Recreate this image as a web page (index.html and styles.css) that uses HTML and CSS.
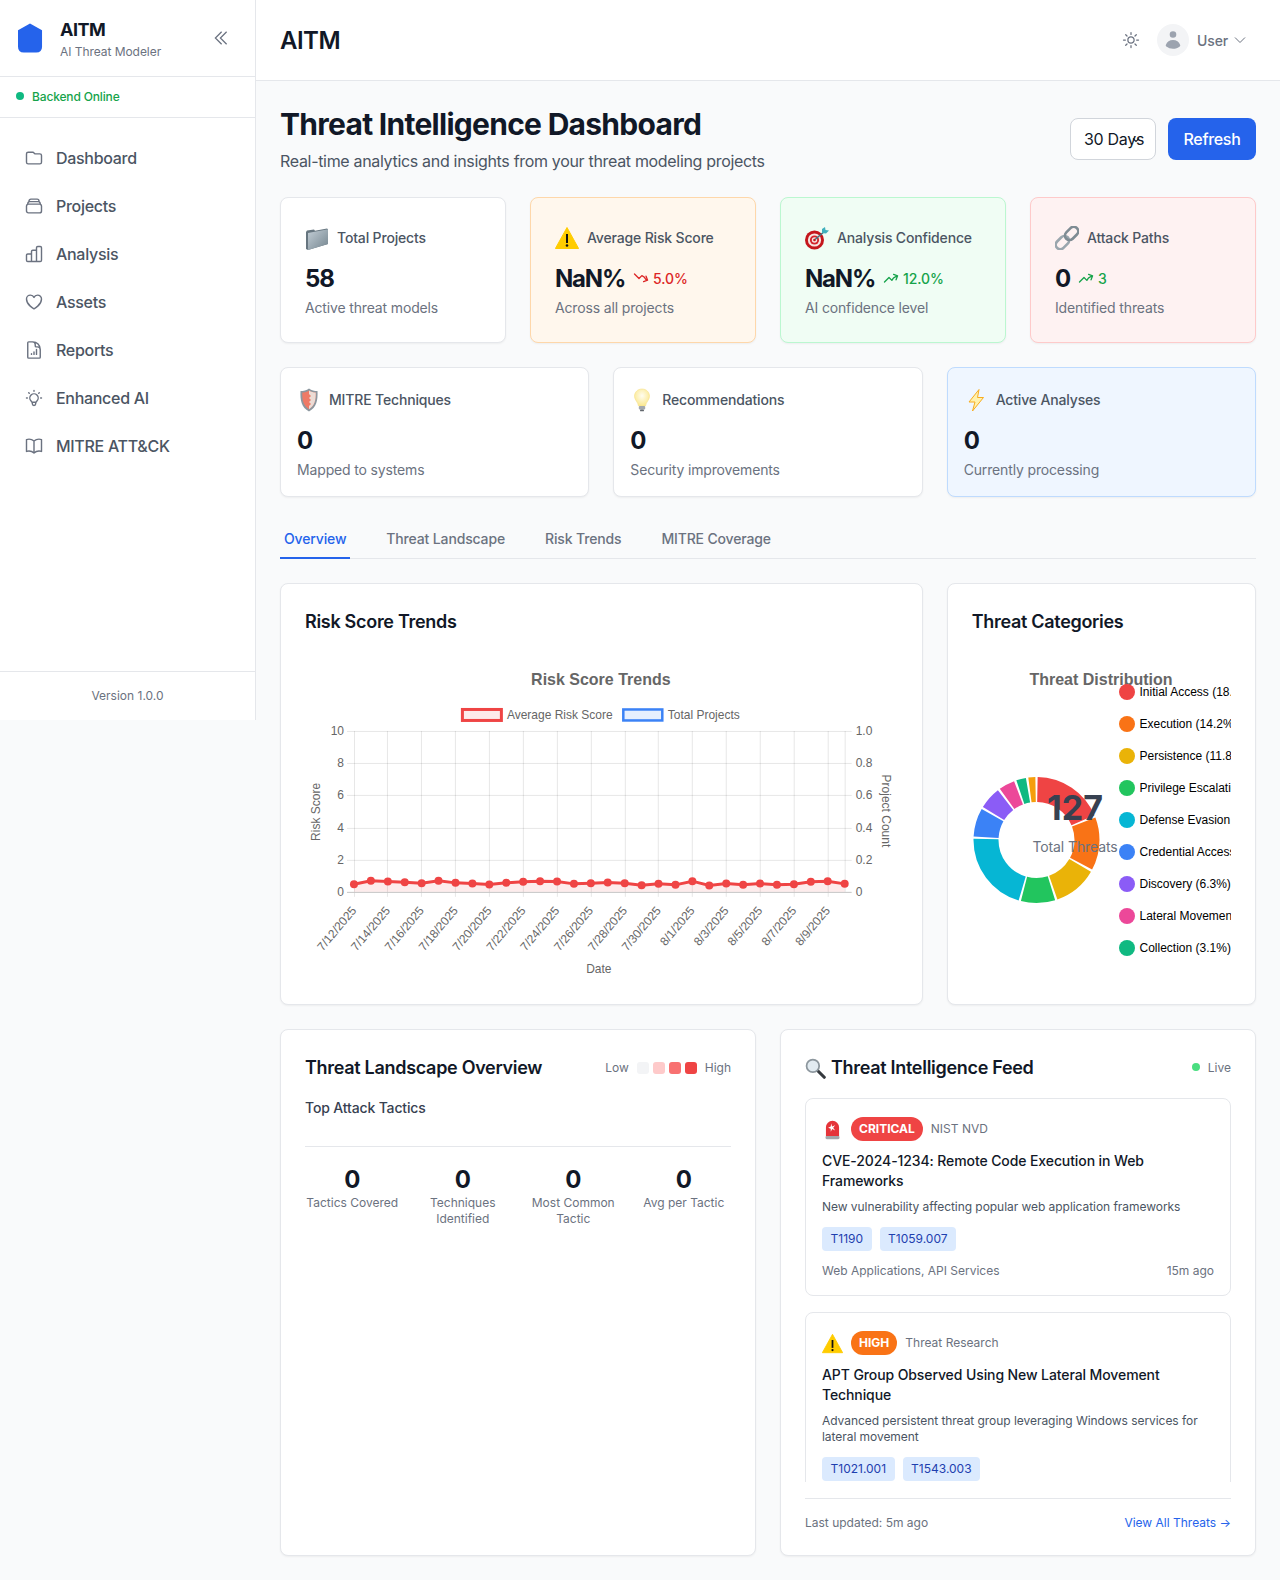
FILE: index.html
```html
<!DOCTYPE html>
<html lang="en">
<head>
<meta charset="UTF-8">
<title>AITM - Threat Intelligence Dashboard</title>
<link rel="stylesheet" href="styles.css">
</head>
<body>
    <!-- pictures used more than once, and the coloured emoji-like ones -->
    <svg class="sprite" aria-hidden="true">
        <defs>
            <linearGradient id="folderFill" x1="0" y1="0" x2="1" y2="1">
                <stop offset="0" stop-color="#c3ced6"/>
                <stop offset="1" stop-color="#74858f"/>
            </linearGradient>
            <radialGradient id="bulbFill" cx="0.5" cy="0.4" r="0.6">
                <stop offset="0" stop-color="#fffdf0"/>
                <stop offset="1" stop-color="#fbe88f"/>
            </radialGradient>
        </defs>
        <symbol id="e-folder" viewBox="0 0 24 24">
            <path d="M1 6 2 4.5 9 3.5 10 4.8 22 2.5 23 3.2V18L3 24 1 23Z" fill="#66757f"/>
            <path d="M3 7 23 3.2V18L3 24Z" fill="url(#folderFill)"/>
        </symbol>
        <symbol id="e-warning" viewBox="0 0 24 24">
            <path d="M12 1.5 23.6 22.5H.4Z" fill="#fc0" stroke="#fc0" stroke-linejoin="round"/>
            <rect x="11" y="8" width="2" height="9" fill="#111"/>
            <circle cx="12" cy="19.5" r="1.3" fill="#111"/>
        </symbol>
        <symbol id="e-target" viewBox="0 0 24 24">
            <circle cx="9.5" cy="14" r="9.5" fill="#c4161c"/>
            <circle cx="9.5" cy="14" r="6.6" fill="#f6e4e0"/>
            <circle cx="9.5" cy="14" r="4.6" fill="#d4232a"/>
            <circle cx="9.5" cy="14" r="2.7" fill="#f6e4e0"/>
            <circle cx="9.5" cy="14" r="1.3" fill="#c4161c"/>
            <path d="M10 13.5 20 5" stroke="#47737f" stroke-width="1.6"/>
            <path d="M17 3 20 1 20.5 4 24 4.500 21 7.500 17 7Z" fill="#3fb0bd"/>
        </symbol>
        <symbol id="e-link" viewBox="0 0 24 24">
            <g transform="rotate(-45 12 12)" fill="none" stroke-width="2.6">
                <rect x="-2" y="7.500" width="15" height="9" rx="4.500" stroke="#9aa6ae"/>
                <rect x="11" y="7.500" width="15" height="9" rx="4.500" stroke="#7f8c94"/>
            </g>
        </symbol>
        <symbol id="e-shield" viewBox="0 0 24 24">
            <path d="M12 .5C14.500 2.500 17.500 3 20.500 3 21 12 19.500 19.500 12 23.500 4.500 19.500 3 12 3.500 3 6.500 3 9.500 2.500 12 .5Z" fill="#8c979f"/>
            <path d="M12 2.500C14 4 16.500 4.500 18.700 4.600 19 12 17.500 18 12 21.300 6.500 18 5 12 5.300 4.600 7.500 4.500 10 4 12 2.500Z" fill="#ee7a66"/>
            <path d="M12 2.500C14 4 16.500 4.500 18.700 4.600 19 12 17.500 18 12 21.300V18L14 16 12 14 14 12 12 10 14 8 12 6Z" fill="#ecdcd5"/>
        </symbol>
        <symbol id="e-bulb" viewBox="0 0 24 24">
            <path d="M12 1C7.500 1 4.500 4.300 4.500 8.300 4.500 12 8 14 8.500 18H15.500C16 14 19.500 12 19.500 8.300 19.500 4.300 16.500 1 12 1Z" fill="url(#bulbFill)" stroke="#f6e08a" stroke-width=".6"/>
            <rect x="8.800" y="18" width="6.400" height="3.500" rx="1" fill="#a3a8ad"/>
            <rect x="10" y="21.500" width="4" height="1.800" rx=".9" fill="#62686e"/>
        </symbol>
        <symbol id="e-bolt" viewBox="0 0 24 24">
            <path d="M15 1.500 5 14H11L8.500 23 19.500 9.500H13.500Z" fill="#fff1ad" stroke="#f8ac1e" stroke-linejoin="round"/>
        </symbol>
        <symbol id="e-search" viewBox="0 0 24 24">
            <path d="M14 14 22 22" stroke="#35393e" stroke-width="3.600" stroke-linecap="round"/>
            <circle cx="9" cy="9" r="7.200" fill="#e2ebf1" stroke="#8d979e" stroke-width="2"/>
        </symbol>
        <symbol id="e-siren" viewBox="0 0 24 24">
            <path d="M4.500 20V9.500a7.500 7.500 0 0 1 15 0V20Z" fill="#e5343a"/>
            <path d="M10.500 5 11.500 8.500 15 7 12.800 10 15 13 11.700 11.500 10 14.500 10 11 7 10 10 8.500Z" fill="#fff"/>
            <rect x="4" y="19.500" width="16" height="3.500" rx="1.500" fill="#a2a7ab"/>
        </symbol>
        <symbol id="trend-up" viewBox="0 0 24 24">
            <path d="M2.250 18 9 11.250l4.306 4.307a11.950 11.950 0 0 1 5.814-5.519l2.740-1.220m0 0-5.940-2.280m5.940 2.280-2.280 5.941" fill="none" stroke="currentColor" stroke-width="2" stroke-linecap="round" stroke-linejoin="round"/>
        </symbol>
        <symbol id="trend-down" viewBox="0 0 24 24">
            <path d="M2.250 6 9 12.750l4.306-4.307a11.950 11.950 0 0 1 5.814 5.519l2.740 1.220m0 0-5.940 2.280m5.940-2.280-2.280-5.941" fill="none" stroke="currentColor" stroke-width="2" stroke-linecap="round" stroke-linejoin="round"/>
        </symbol>
    </svg>

    <div class="layout">
        <aside class="sidebar">
            <div class="brand">
                <svg class="brand-logo" viewBox="0 0 26 30"><path d="M12.500 0 25 7V24Q25 30 19 30H6Q0 30 0 24V7Z"/></svg>
                <div class="brand-text">
                    <div class="brand-name">AITM</div>
                    <div class="brand-sub">AI Threat Modeler</div>
                </div>
                <svg class="collapse-icon" viewBox="0 0 24 24"><path d="M18.750 19.500 11.250 12l7.500-7.500m-6 15L5.250 12l7.500-7.500"/></svg>
            </div>
            <div class="backend-status"><span class="status-dot"></span>Backend Online</div>
            <nav class="nav">
                <a class="nav-item"><svg viewBox="0 0 24 24"><path d="M3 7v10a2 2 0 0 0 2 2h14a2 2 0 0 0 2-2V9a2 2 0 0 0-2-2h-6l-2-2H5a2 2 0 0 0-2 2z"/></svg>Dashboard</a>
                <a class="nav-item"><svg viewBox="0 0 24 24"><path d="M6 6.878V6a2.250 2.250 0 0 1 2.250-2.250h7.500A2.250 2.250 0 0 1 18 6v.878m-12 0c.235-.083.487-.128.750-.128h10.500c.263 0 .515.045.750.128m-12 0A2.250 2.250 0 0 0 4.500 9v.878m13.500-3A2.250 2.250 0 0 1 19.500 9v.878m0 0a2.246 2.246 0 0 0-.750-.128H5.250c-.263 0-.515.045-.750.128m15 0A2.250 2.250 0 0 1 21 12v6a2.250 2.250 0 0 1-2.250 2.250H5.250A2.250 2.250 0 0 1 3 18v-6c0-.980.626-1.813 1.500-2.122"/></svg>Projects</a>
                <a class="nav-item"><svg viewBox="0 0 24 24"><path d="M3 13.500A1.500 1.500 0 0 1 4.500 12H9v9H4.500A1.500 1.500 0 0 1 3 19.500ZM9 9a1.500 1.500 0 0 1 1.500-1.500H15V21H9ZM15 4.500A1.500 1.500 0 0 1 16.500 3h3A1.500 1.500 0 0 1 21 4.500v15a1.500 1.500 0 0 1-1.500 1.500H15Z"/></svg>Analysis</a>
                <a class="nav-item"><svg viewBox="0 0 24 24"><path d="M21 8.250c0-2.485-2.099-4.500-4.688-4.500-1.935 0-3.597 1.126-4.312 2.733-.715-1.607-2.377-2.733-4.313-2.733C5.100 3.750 3 5.765 3 8.250c0 7.220 9 12 9 12s9-4.780 9-12z"/></svg>Assets</a>
                <a class="nav-item"><svg viewBox="0 0 24 24"><path d="M19.500 14.250v-2.625a3.375 3.375 0 0 0-3.375-3.375h-1.500A1.125 1.125 0 0 1 13.500 7.125v-1.500a3.375 3.375 0 0 0-3.375-3.375H8.250M9 16.500v.750m3-3v3m3-6v6M10.500 2.250H5.625c-.621 0-1.125.504-1.125 1.125v17.250c0 .621.504 1.125 1.125 1.125h12.750c.621 0 1.125-.504 1.125-1.125V11.250a9 9 0 0 0-9-9z"/></svg>Reports</a>
                <a class="nav-item"><svg viewBox="0 0 24 24"><path d="M9.663 17h4.673M12 3v1m6.364 1.636-.707.707M21 12h-1M4 12H3m3.343-5.657-.707-.707m2.828 9.900a5 5 0 1 1 7.072 0l-.548.547A3.374 3.374 0 0 0 14 18.469V19a2 2 0 1 1-4 0v-.531c0-.895-.356-1.754-.988-2.386l-.548-.547z"/></svg>Enhanced AI</a>
                <a class="nav-item"><svg viewBox="0 0 24 24"><path d="M12 6.042A8.967 8.967 0 0 0 6 3.750c-1.052 0-2.062.180-3 .512v14.250A8.987 8.987 0 0 1 6 18c2.305 0 4.408.867 6 2.292m0-14.250a8.966 8.966 0 0 1 6-2.292c1.052 0 2.062.180 3 .512v14.250A8.987 8.987 0 0 0 18 18a8.967 8.967 0 0 0-6 2.292m0-14.250v14.250"/></svg>MITRE ATT&amp;CK</a>
            </nav>
            <div class="sidebar-footer">Version 1.0.0</div>
        </aside>

        <div class="main">
            <header class="topbar">
                <div class="topbar-title">AITM</div>
                <div class="topbar-right">
                    <svg class="sun-icon" viewBox="0 0 24 24"><path d="M12 3v2.250m6.364.386-1.591 1.591M21 12h-2.250m-.386 6.364-1.591-1.591M12 18.750V21m-4.773-4.227-1.591 1.591M5.250 12H3m4.227-4.773L5.636 5.636M15.750 12a3.750 3.750 0 1 1-7.500 0 3.750 3.750 0 0 1 7.500 0z"/></svg>
                    <div class="user-menu">
                        <span class="avatar"><svg viewBox="0 0 20 20"><path d="M10 8a3 3 0 1 0 0-6 3 3 0 0 0 0 6zM3.465 14.493a1.230 1.230 0 0 0 .410 1.412A9.957 9.957 0 0 0 10 18c2.310 0 4.438-.784 6.131-2.100.430-.333.604-.903.408-1.410a7.002 7.002 0 0 0-13.074.003z"/></svg></span>
                        <span class="user-name">User</span>
                        <svg class="user-chevron" viewBox="0 0 24 24"><path d="M19.500 8.250 12 15.750 4.500 8.250"/></svg>
                    </div>
                </div>
            </header>

            <main class="content">
                <div class="page-head">
                    <div>
                        <h1 class="page-title">Threat Intelligence Dashboard</h1>
                        <p class="page-sub">Real-time analytics and insights from your threat modeling projects</p>
                    </div>
                    <div class="page-actions">
                        <div class="range-select">30 Days<svg viewBox="0 0 10 10"><path d="M2 3.500 5 6.500 8 3.500"/></svg></div>
                        <button class="refresh-btn">Refresh</button>
                    </div>
                </div>

                <div class="stats stats-four">
                    <div class="stat-card">
                        <div class="stat-label"><svg class="emoji"><use href="#e-folder"/></svg>Total Projects</div>
                        <div class="stat-value-row"><span class="stat-value">58</span></div>
                        <div class="stat-sub">Active threat models</div>
                    </div>
                    <div class="stat-card stat-orange">
                        <div class="stat-label"><svg class="emoji"><use href="#e-warning"/></svg>Average Risk Score</div>
                        <div class="stat-value-row"><span class="stat-value">NaN%</span><span class="trend trend-bad"><svg><use href="#trend-down"/></svg>5.0%</span></div>
                        <div class="stat-sub">Across all projects</div>
                    </div>
                    <div class="stat-card stat-green">
                        <div class="stat-label"><svg class="emoji"><use href="#e-target"/></svg>Analysis Confidence</div>
                        <div class="stat-value-row"><span class="stat-value">NaN%</span><span class="trend trend-good"><svg><use href="#trend-up"/></svg>12.0%</span></div>
                        <div class="stat-sub">AI confidence level</div>
                    </div>
                    <div class="stat-card stat-red">
                        <div class="stat-label"><svg class="emoji"><use href="#e-link"/></svg>Attack Paths</div>
                        <div class="stat-value-row"><span class="stat-value">0</span><span class="trend trend-good"><svg><use href="#trend-up"/></svg>3</span></div>
                        <div class="stat-sub">Identified threats</div>
                    </div>
                </div>

                <div class="stats stats-three">
                    <div class="stat-card stat-small">
                        <div class="stat-label"><svg class="emoji"><use href="#e-shield"/></svg>MITRE Techniques</div>
                        <div class="stat-value-row"><span class="stat-value">0</span></div>
                        <div class="stat-sub">Mapped to systems</div>
                    </div>
                    <div class="stat-card stat-small">
                        <div class="stat-label"><svg class="emoji"><use href="#e-bulb"/></svg>Recommendations</div>
                        <div class="stat-value-row"><span class="stat-value">0</span></div>
                        <div class="stat-sub">Security improvements</div>
                    </div>
                    <div class="stat-card stat-small stat-blue">
                        <div class="stat-label"><svg class="emoji"><use href="#e-bolt"/></svg>Active Analyses</div>
                        <div class="stat-value-row"><span class="stat-value">0</span></div>
                        <div class="stat-sub">Currently processing</div>
                    </div>
                </div>

                <div class="tabs">
                    <a class="tab tab-active">Overview</a>
                    <a class="tab">Threat Landscape</a>
                    <a class="tab">Risk Trends</a>
                    <a class="tab">MITRE Coverage</a>
                </div>

                <div class="chart-row">
                    <section class="panel panel-wide">
                        <h2 class="panel-title">Risk Score Trends</h2>
                        <svg class="chart" viewBox="305 652 593 328" preserveAspectRatio="xMinYMin">
                            <path class="grid" d="M347 731.500H852M347 763.500H852M347 795.500H852M347 828.500H852M347 860.500H852M354.500 731V897M387.500 731V897M421.500 731V897M455.500 731V897M489.500 731V897M523.500 731V897M557.500 731V897M591.500 731V897M625.500 731V897M658.500 731V897M692.500 731V897M726.500 731V897M760.500 731V897M794.500 731V897M828.500 731V897M845.500 731V892"/>
                            <path class="axis" d="M347 892.500H852"/>
                            <text class="chart-title" x="601" y="685">Risk Score Trends</text>

                            <rect x="462.500" y="709.500" width="39" height="11" fill="#fdeaea" stroke="#ef4444" stroke-width="3"/>
                            <text class="tick" x="507" y="719">Average Risk Score</text>
                            <rect x="623.500" y="709.500" width="39" height="11" fill="#e7f0fe" stroke="#3b82f6" stroke-width="2.500"/>
                            <text class="tick" x="668" y="719">Total Projects</text>

                            <g class="tick tick-end">
                                <text x="344" y="735">10</text>
                                <text x="344" y="767">8</text>
                                <text x="344" y="799">6</text>
                                <text x="344" y="832">4</text>
                                <text x="344" y="864">2</text>
                                <text x="344" y="896">0</text>
                            </g>
                            <g class="tick">
                                <text x="856" y="735">1.0</text>
                                <text x="856" y="767">0.8</text>
                                <text x="856" y="799">0.6</text>
                                <text x="856" y="832">0.4</text>
                                <text x="856" y="864">0.2</text>
                                <text x="856" y="896">0</text>
                            </g>
                            <g class="tick tick-mid">
                                <text transform="translate(320 812) rotate(-90)">Risk Score</text>
                                <text transform="translate(882 811) rotate(90)">Project Count</text>
                                <text x="599" y="973">Date</text>
                            </g>
                            <g class="tick tick-end">
                                <text transform="translate(357 911) rotate(-50)">7/12/2025</text>
                                <text transform="translate(390.900 911) rotate(-50)">7/14/2025</text>
                                <text transform="translate(424.700 911) rotate(-50)">7/16/2025</text>
                                <text transform="translate(458.600 911) rotate(-50)">7/18/2025</text>
                                <text transform="translate(492.400 911) rotate(-50)">7/20/2025</text>
                                <text transform="translate(526.300 911) rotate(-50)">7/22/2025</text>
                                <text transform="translate(560.200 911) rotate(-50)">7/24/2025</text>
                                <text transform="translate(594 911) rotate(-50)">7/26/2025</text>
                                <text transform="translate(627.900 911) rotate(-50)">7/28/2025</text>
                                <text transform="translate(661.700 911) rotate(-50)">7/30/2025</text>
                                <text transform="translate(695.600 911) rotate(-50)">8/1/2025</text>
                                <text transform="translate(729.500 911) rotate(-50)">8/3/2025</text>
                                <text transform="translate(763.300 911) rotate(-50)">8/5/2025</text>
                                <text transform="translate(797.200 911) rotate(-50)">8/7/2025</text>
                                <text transform="translate(831 911) rotate(-50)">8/9/2025</text>
                            </g>

                            <marker id="dot" markerUnits="userSpaceOnUse" markerWidth="10" markerHeight="10" refX="5" refY="5">
                                <circle cx="5" cy="5" r="4" fill="#ef4444"/>
                            </marker>
                            <path class="risk-area" d="M354 884.300 370.900 881 387.900 881.700 404.800 882.300 421.700 883.300 438.600 881 455.600 883 472.500 883.700 489.400 884.700 506.400 883 523.300 882 540.200 881.300 557.200 881.700 574.100 884 591 883.300 607.900 882.700 624.900 883.300 641.800 885.300 658.700 884 675.700 885 692.600 881.300 709.500 885.700 726.500 883.700 743.400 885 760.300 883.700 777.200 885 794.200 884.300 811.100 882 828 881.300 845 884V892H354Z"/>
                            <polyline class="risk-line" points="354,884.300 370.900,881 387.900,881.700 404.800,882.300 421.700,883.300 438.600,881 455.600,883 472.500,883.700 489.400,884.700 506.400,883 523.300,882 540.200,881.300 557.200,881.700 574.100,884 591,883.300 607.900,882.700 624.900,883.300 641.800,885.300 658.700,884 675.700,885 692.600,881.300 709.500,885.700 726.500,883.700 743.400,885 760.300,883.700 777.200,885 794.200,884.300 811.100,882 828,881.300 845,884"/>
                        </svg>
                    </section>

                    <section class="panel">
                        <h2 class="panel-title">Threat Categories</h2>
                        <svg class="chart" viewBox="972 652 259.330 328" preserveAspectRatio="xMinYMin">
                            <g class="donut" transform="rotate(-90 1036.500 840)">
                                <circle cx="1036.500" cy="840" r="50.500" pathLength="100" stroke="#ef4444" stroke-dasharray="18.300 81.700" stroke-dashoffset="-.3"/>
                                <circle cx="1036.500" cy="840" r="50.500" pathLength="100" stroke="#f97316" stroke-dasharray="13.600 86.400" stroke-dashoffset="-19.200"/>
                                <circle cx="1036.500" cy="840" r="50.500" pathLength="100" stroke="#eab308" stroke-dasharray="11.200 88.800" stroke-dashoffset="-33.400"/>
                                <circle cx="1036.500" cy="840" r="50.500" pathLength="100" stroke="#22c55e" stroke-dasharray="8.800 91.200" stroke-dashoffset="-45.200"/>
                                <circle cx="1036.500" cy="840" r="50.500" pathLength="100" stroke="#06b6d4" stroke-dasharray="20.700 79.300" stroke-dashoffset="-54.600"/>
                                <circle cx="1036.500" cy="840" r="50.500" pathLength="100" stroke="#3b82f6" stroke-dasharray="7.300 92.700" stroke-dashoffset="-75.900"/>
                                <circle cx="1036.500" cy="840" r="50.500" pathLength="100" stroke="#8b5cf6" stroke-dasharray="5.700 94.300" stroke-dashoffset="-83.800"/>
                                <circle cx="1036.500" cy="840" r="50.500" pathLength="100" stroke="#ec4899" stroke-dasharray="4.100 95.900" stroke-dashoffset="-90.100"/>
                                <circle cx="1036.500" cy="840" r="50.500" pathLength="100" stroke="#10b981" stroke-dasharray="2.500 97.500" stroke-dashoffset="-94.800"/>
                                <circle cx="1036.500" cy="840" r="50.500" pathLength="100" stroke="#f59e0b" stroke-dasharray="1.800 98.200" stroke-dashoffset="-97.900"/>
                            </g>
                            <text class="chart-title" x="1101" y="685">Threat Distribution</text>
                            <text class="donut-total" x="1075" y="820">127</text>
                            <text class="donut-label" x="1075" y="852">Total Threats</text>
                            <g class="donut-legend">
                                <circle cx="1127" cy="692" r="8" fill="#ef4444"/><text x="1139.500" y="696">Initial Access (18.9%)</text>
                                <circle cx="1127" cy="724" r="8" fill="#f97316"/><text x="1139.500" y="728">Execution (14.2%)</text>
                                <circle cx="1127" cy="756" r="8" fill="#eab308"/><text x="1139.500" y="760">Persistence (11.8%)</text>
                                <circle cx="1127" cy="788" r="8" fill="#22c55e"/><text x="1139.500" y="792">Privilege Escalation (9.4%)</text>
                                <circle cx="1127" cy="820" r="8" fill="#06b6d4"/><text x="1139.500" y="824">Defense Evasion (21.3%)</text>
                                <circle cx="1127" cy="852" r="8" fill="#3b82f6"/><text x="1139.500" y="856">Credential Access (7.9%)</text>
                                <circle cx="1127" cy="884" r="8" fill="#8b5cf6"/><text x="1139.500" y="888">Discovery (6.3%)</text>
                                <circle cx="1127" cy="916" r="8" fill="#ec4899"/><text x="1139.500" y="920">Lateral Movement (4.7%)</text>
                                <circle cx="1127" cy="948" r="8" fill="#10b981"/><text x="1139.500" y="952">Collection (3.1%)</text>
                            </g>
                        </svg>
                    </section>
                </div>

                <div class="bottom-row">
                    <section class="panel">
                        <div class="panel-head">
                            <h2 class="panel-title">Threat Landscape Overview</h2>
                            <div class="heat-legend">
                                <span>Low</span>
                                <div class="heat-cells">
                                    <i class="heat-0"></i><i class="heat-1"></i><i class="heat-2"></i><i class="heat-3"></i>
                                </div>
                                <span>High</span>
                            </div>
                        </div>
                        <h3 class="tactics-title">Top Attack Tactics</h3>
                        <div class="tactics-stats">
                            <div><div class="tactic-value">0</div><div class="tactic-label">Tactics Covered</div></div>
                            <div><div class="tactic-value">0</div><div class="tactic-label">Techniques Identified</div></div>
                            <div><div class="tactic-value">0</div><div class="tactic-label">Most Common Tactic</div></div>
                            <div><div class="tactic-value">0</div><div class="tactic-label">Avg per Tactic</div></div>
                        </div>
                    </section>

                    <section class="panel">
                        <div class="panel-head">
                            <h2 class="panel-title feed-title"><svg class="feed-search"><use href="#e-search"/></svg>Threat Intelligence Feed</h2>
                            <div class="live"><span class="live-dot"></span>Live</div>
                        </div>
                        <div class="feed-list">
                            <article class="feed-item">
                                <div class="feed-top">
                                    <svg class="feed-emoji"><use href="#e-siren"/></svg>
                                    <span class="badge badge-critical">CRITICAL</span>
                                    <span class="feed-source">NIST NVD</span>
                                </div>
                                <div class="feed-name">CVE-2024-1234: Remote Code Execution in Web Frameworks</div>
                                <p class="feed-desc">New vulnerability affecting popular web application frameworks</p>
                                <div class="feed-tags"><span class="tag">T1190</span><span class="tag">T1059.007</span></div>
                                <div class="feed-meta"><span>Web Applications, API Services</span><span>15m ago</span></div>
                            </article>
                            <article class="feed-item">
                                <div class="feed-top">
                                    <svg class="feed-emoji"><use href="#e-warning"/></svg>
                                    <span class="badge badge-high">HIGH</span>
                                    <span class="feed-source">Threat Research</span>
                                </div>
                                <div class="feed-name">APT Group Observed Using New Lateral Movement Technique</div>
                                <p class="feed-desc">Advanced persistent threat group leveraging Windows services for lateral movement</p>
                                <div class="feed-tags"><span class="tag">T1021.001</span><span class="tag">T1543.003</span></div>
                                <div class="feed-meta"><span>Windows Servers</span><span>1h ago</span></div>
                            </article>
                        </div>
                        <div class="feed-footer">
                            <span>Last updated: 5m ago</span>
                            <a class="feed-link">View All Threats →</a>
                        </div>
                    </section>
                </div>
            </main>
        </div>
    </div>
</body>
</html>
```

FILE: styles.css
```css
* {
    box-sizing: border-box;
}

body {
    margin: 0;
    background-color: #f9fafb;
    color: #111827;
    font-family: 'Inter', 'Liberation Sans', sans-serif;
}

h1, h2, h3, p {
    margin: 0;
}

.sprite {
    position: absolute;
    width: 0;
    height: 0;
}

.layout {
    display: flex;
    align-items: flex-start;
}

/* Sidebar */
.sidebar {
    width: 256px;
    height: 720px;
    flex-shrink: 0;
    display: flex;
    flex-direction: column;
    background: #fff;
    border-right: 1px solid #e5e7eb;
}

.brand {
    height: 77px;
    display: flex;
    align-items: center;
    padding-left: 18px;
    border-bottom: 1px solid #e5e7eb;
}

.brand-logo {
    width: 25px;
    height: 30px;
    fill: #2563eb;
}

.brand-text {
    margin-left: 17px;
    width: 151px;
}

.brand-name {
    font-size: 18px;
    line-height: 28px;
    font-weight: 700;
    letter-spacing: -0.5px;
}

.brand-sub {
    font-size: 12px;
    line-height: 16px;
    color: #6b7280;
    letter-spacing: -0.05px;
}

.collapse-icon {
    width: 20px;
    height: 20px;
    fill: none;
    stroke: #6b7280;
    stroke-width: 1.5;
}

.backend-status {
    height: 41px;
    display: flex;
    align-items: center;
    gap: 8px;
    padding: 0 0 2px 16px;
    font-size: 12px;
    font-weight: 500;
    letter-spacing: -0.15px;
    color: #16a34a;
    border-bottom: 1px solid #e5e7eb;
}

.status-dot {
    width: 8px;
    height: 8px;
    border-radius: 50%;
    background: #10b981;
}

.nav {
    flex: 1;
    padding: 16px 8px;
}

.nav-item {
    height: 48px;
    display: flex;
    align-items: center;
    gap: 12px;
    padding-left: 16px;
    font-size: 16px;
    font-weight: 500;
    letter-spacing: -0.3px;
    color: #4b5563;
}

.nav-item svg {
    width: 20px;
    height: 20px;
    fill: none;
    stroke: #6b7280;
    stroke-width: 1.7;
    stroke-linecap: round;
    stroke-linejoin: round;
}

.sidebar-footer {
    height: 49px;
    display: flex;
    align-items: center;
    justify-content: center;
    padding-bottom: 2px;
    font-size: 12px;
    color: #6b7280;
    border-top: 1px solid #e5e7eb;
}

/* Top bar */
.main {
    flex: 1;
    min-width: 0;
}

.topbar {
    height: 81px;
    display: flex;
    align-items: center;
    justify-content: space-between;
    padding: 0 24px;
    background: #fff;
    border-bottom: 1px solid #e5e7eb;
}

.topbar-title {
    font-size: 24px;
    font-weight: 600;
    letter-spacing: -0.5px;
}

.topbar-right {
    display: flex;
    align-items: center;
    gap: 16px;
}

.sun-icon {
    width: 20px;
    height: 20px;
    fill: none;
    stroke: #6b7280;
    stroke-width: 1.5;
    stroke-linecap: round;
}

.user-menu {
    display: flex;
    align-items: center;
    gap: 8px;
    padding-right: 8px;
}

.avatar {
    width: 32px;
    height: 32px;
    border-radius: 50%;
    background: #f3f4f6;
    display: flex;
    align-items: center;
    justify-content: center;
}

.avatar svg {
    width: 22px;
    height: 22px;
    fill: #9ca3af;
}

.user-name {
    font-size: 14px;
    font-weight: 500;
    letter-spacing: -0.15px;
    color: #6b7280;
}

.user-chevron {
    width: 16px;
    height: 16px;
    margin-left: -4px;
    fill: none;
    stroke: #6b7280;
    stroke-width: 1.5;
}

/* Page head */
.content {
    padding: 24px;
}

.page-head {
    display: flex;
    justify-content: space-between;
    margin-bottom: 24px;
}

.page-title {
    padding-top: 1px;
    font-size: 30px;
    line-height: 36px;
    font-weight: 700;
    letter-spacing: -0.72px;
}

.page-sub {
    margin-top: 7px;
    font-size: 16px;
    line-height: 24px;
    letter-spacing: -0.32px;
    color: #4b5563;
}

.page-actions {
    display: flex;
    align-items: flex-start;
    gap: 12px;
    margin-top: 13px;
}

.range-select {
    position: relative;
    width: 86px;
    height: 42px;
    padding-left: 13px;
    line-height: 40px;
    font-size: 16px;
    letter-spacing: -0.3px;
    background: #fff;
    border: 1px solid #d1d5db;
    border-radius: 8px;
}

.range-select svg {
    position: absolute;
    top: 16px;
    left: 60px;
    width: 10px;
    height: 10px;
    fill: none;
    stroke: #111827;
    stroke-width: 1.2;
}

.refresh-btn {
    width: 88px;
    height: 42px;
    padding: 0;
    border: 0;
    border-radius: 8px;
    background: #2563eb;
    color: #fff;
    font-family: inherit;
    font-size: 16px;
    font-weight: 500;
    letter-spacing: -0.3px;
}

/* Stat cards */
.stats {
    display: grid;
    gap: 24px;
    margin-bottom: 24px;
}

.stats-four {
    grid-template-columns: repeat(4, 1fr);
}

.stats-three {
    grid-template-columns: repeat(3, 1fr);
}

.stat-card {
    padding: 24px;
    background: #fff;
    border: 1px solid #e5e7eb;
    border-radius: 8px;
    box-shadow: 0 1px 2px rgba(0, 0, 0, 0.05);
}

.stat-small {
    padding: 16px;
}

.stat-orange {
    background: #fff7ed;
    border-color: #fed7aa;
}

.stat-green {
    background: #f0fdf4;
    border-color: #bbf7d0;
}

.stat-red {
    background: #fef2f2;
    border-color: #fecaca;
}

.stat-blue {
    background: #eff6ff;
    border-color: #bfdbfe;
}

.stat-label {
    display: flex;
    align-items: center;
    gap: 8px;
    height: 32px;
    padding-bottom: 2px;
    margin-bottom: 8px;
    font-size: 14px;
    font-weight: 500;
    letter-spacing: -0.16px;
    color: #4b5563;
}

.emoji {
    width: 24px;
    height: 24px;
    margin-bottom: -2px;
}

.stat-value-row {
    display: flex;
    align-items: center;
    gap: 8px;
    height: 32px;
}

.stat-value {
    font-size: 24px;
    font-weight: 700;
    letter-spacing: -1.2px;
}

.trend {
    display: flex;
    align-items: center;
    gap: 4px;
    font-size: 14px;
    font-weight: 500;
    letter-spacing: -0.1px;
}

.trend svg {
    width: 16px;
    height: 16px;
}

.trend-bad {
    color: #dc2626;
}

.trend-good {
    color: #16a34a;
}

.stat-sub {
    margin-top: 4px;
    font-size: 14px;
    line-height: 20px;
    letter-spacing: -0.15px;
    color: #6b7280;
}

/* Tabs */
.tabs {
    display: flex;
    gap: 32px;
    margin-bottom: 24px;
    border-bottom: 1px solid #e5e7eb;
}

.tab {
    padding: 8px 4px;
    margin-bottom: -1px;
    font-size: 14px;
    line-height: 20px;
    font-weight: 500;
    letter-spacing: -0.15px;
    color: #6b7280;
    border-bottom: 2px solid transparent;
}

.tab-active {
    color: #2563eb;
    border-bottom-color: #2563eb;
}

/* Panels */
.chart-row {
    display: grid;
    grid-template-columns: repeat(3, 1fr);
    gap: 24px;
    margin-bottom: 24px;
}

.bottom-row {
    display: grid;
    grid-template-columns: repeat(2, 1fr);
    gap: 24px;
}

.panel {
    padding: 24px;
    min-width: 0;
    background: #fff;
    border: 1px solid #e5e7eb;
    border-radius: 8px;
    box-shadow: 0 1px 2px rgba(0, 0, 0, 0.05);
}

.panel-wide {
    grid-column: span 2;
}

.panel-title {
    font-size: 18px;
    line-height: 28px;
    font-weight: 600;
    letter-spacing: -0.3px;
}

.chart {
    display: block;
    width: 100%;
    height: 328px;
    margin-top: 16px;
    font-family: 'Liberation Sans', sans-serif;
}

.chart-title {
    font-size: 16px;
    font-weight: 700;
    fill: #666;
    text-anchor: middle;
}

.tick {
    font-size: 12px;
    fill: #666;
}

.tick-end {
    text-anchor: end;
}

.tick-mid {
    text-anchor: middle;
}

.grid {
    fill: none;
    stroke: rgba(0, 0, 0, 0.1);
}

.axis {
    fill: none;
    stroke: #c4c4c4;
}

.risk-area {
    fill: rgba(239, 68, 68, 0.1);
}

.risk-line {
    fill: none;
    stroke: #ef4444;
    stroke-width: 3;
    marker-start: url(#dot);
    marker-mid: url(#dot);
    marker-end: url(#dot);
}

.donut circle {
    fill: none;
    stroke-width: 25;
}

.donut-total {
    font-family: 'Inter', sans-serif;
    font-size: 34px;
    font-weight: 700;
    fill: #374151;
    text-anchor: middle;
}

.donut-label {
    font-family: 'Inter', sans-serif;
    font-size: 14px;
    letter-spacing: -0.1px;
    fill: #6b7280;
    text-anchor: middle;
}

.donut-legend {
    font-size: 12px;
    fill: #000;
}

/* Threat landscape */
.panel-head {
    display: flex;
    align-items: center;
    justify-content: space-between;
}

.heat-legend {
    display: flex;
    align-items: center;
    gap: 8px;
    font-size: 12px;
    color: #6b7280;
}

.heat-legend span {
    margin-bottom: 2px;
}

.heat-cells {
    display: flex;
    gap: 4px;
}

.heat-cells i {
    width: 12px;
    height: 12px;
    border-radius: 3px;
}

.heat-0 {
    background: #f3f4f6;
}

.heat-1 {
    background: #fecaca;
}

.heat-2 {
    background: #f87171;
}

.heat-3 {
    background: #ef4444;
}

.tactics-title {
    margin-top: 16px;
    font-size: 14px;
    line-height: 20px;
    font-weight: 500;
    letter-spacing: -0.15px;
    color: #374151;
}

.tactics-stats {
    display: grid;
    grid-template-columns: repeat(4, 1fr);
    gap: 16px;
    margin-top: 28px;
    padding-top: 17px;
    border-top: 1px solid #e5e7eb;
    text-align: center;
}

.tactic-value {
    font-size: 24px;
    line-height: 31px;
    font-weight: 700;
}

.tactic-label {
    font-size: 12px;
    line-height: 16px;
    color: #6b7280;
}

/* Feed */
.feed-title {
    display: flex;
    align-items: center;
    gap: 5px;
}

.feed-search {
    width: 21px;
    height: 21px;
}

.live {
    display: flex;
    align-items: center;
    gap: 8px;
    padding-bottom: 2px;
    font-size: 12px;
    color: #6b7280;
}

.live-dot {
    width: 8px;
    height: 8px;
    border-radius: 50%;
    background: #4ade80;
}

.feed-list {
    height: 384px;
    margin-top: 16px;
    overflow: hidden;
}

.feed-item {
    padding: 16px;
    margin-bottom: 16px;
    border: 1px solid #e5e7eb;
    border-radius: 8px;
}

.feed-top {
    display: flex;
    align-items: center;
    gap: 8px;
    height: 28px;
    margin-bottom: 8px;
}

.feed-emoji {
    width: 21px;
    height: 21px;
}

.badge {
    height: 24px;
    padding: 0 8px;
    border-radius: 12px;
    font-size: 12px;
    line-height: 24px;
    font-weight: 700;
    color: #fff;
}

.badge-critical {
    background: #ef4444;
}

.badge-high {
    background: #f97316;
}

.feed-source {
    margin-bottom: 2px;
    font-size: 12px;
    color: #6b7280;
}

.feed-name {
    font-size: 14px;
    line-height: 20px;
    font-weight: 500;
    letter-spacing: -0.1px;
    color: #111827;
}

.feed-desc {
    margin-top: 8px;
    font-size: 12px;
    line-height: 16px;
    letter-spacing: -0.05px;
    color: #4b5563;
}

.feed-tags {
    display: flex;
    gap: 8px;
    margin-top: 12px;
}

.tag {
    height: 24px;
    padding: 0 8.5px;
    border-radius: 4px;
    background: #dbeafe;
    color: #1e40af;
    font-size: 12px;
    line-height: 24px;
}

.feed-meta {
    display: flex;
    justify-content: space-between;
    margin-top: 12px;
    font-size: 12px;
    line-height: 16px;
    color: #6b7280;
}

.feed-footer {
    display: flex;
    justify-content: space-between;
    margin-top: 16px;
    padding-top: 16px;
    border-top: 1px solid #e5e7eb;
    font-size: 12px;
    line-height: 16px;
    color: #6b7280;
}

.feed-link {
    color: #2563eb;
}
```
